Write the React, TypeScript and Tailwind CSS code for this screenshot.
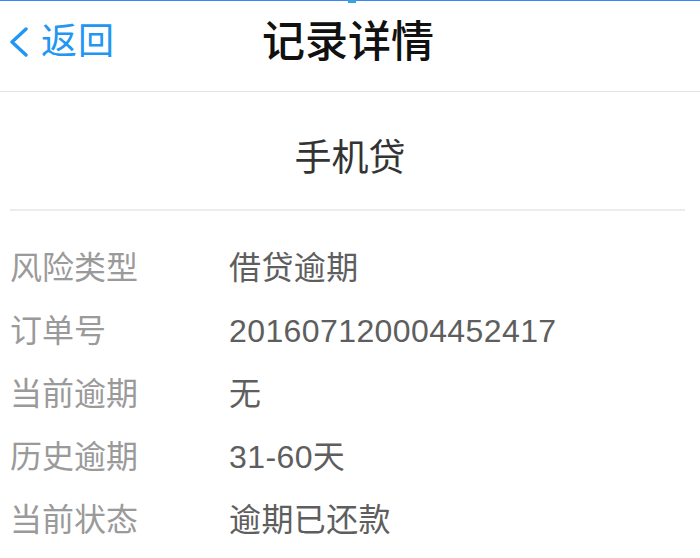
import React from "react";

const font = { fontFamily: '"Liberation Sans", "Noto Sans CJK SC", sans-serif' };

const rows: [string, string][] = [
  ["风险类型", "借贷逾期"],
  ["订单号", "201607120004452417"],
  ["当前逾期", "无"],
  ["历史逾期", "31-60天"],
  ["当前状态", "逾期已还款"],
];

export default function App() {
  return (
    <div className="w-[700px] h-[558px] bg-white overflow-hidden flex flex-col" style={font}>
      <div className="relative h-[1px] bg-[#3a86f5] shrink-0">
        <div className="absolute left-[348px] top-0 w-[8px] h-[3px] bg-[#3aa3dc]" />
      </div>
      <div className="relative h-[91px] shrink-0 flex items-center border-b border-[#e3e3e3]">
        <div className="flex items-center pl-[8px] text-[#2196f3] mt-[-8px]">
          <svg width="22" height="30" viewBox="0 0 22 30" className="mr-[11px]">
            <path d="M18 2 L4 15 L18 28" fill="none" stroke="#2196f3" strokeWidth="3.4" strokeLinecap="round" strokeLinejoin="round" />
          </svg>
          <span className="text-[36px] leading-none tracking-[1px]">返回</span>
        </div>
        <div className="absolute inset-0 flex items-center justify-center mt-[-8px] pr-[4px]">
          <span className="text-[43px] leading-none font-medium text-[#111]">记录详情</span>
        </div>
      </div>
      <div className="h-[117px] shrink-0 flex items-center justify-center pt-[16px]">
        <span className="text-[37px] leading-none text-[#333]">手机贷</span>
      </div>
      <div className="mx-[10px] mr-[15px] h-[2px] bg-[#ececec] shrink-0" />
      <div className="flex flex-col pt-[25px] pl-[10px]">
        {rows.map(([k, v]) => (
          <div key={k} className="h-[63px] flex items-center">
            <span className="w-[219px] text-[32px] leading-none text-[#9a9a9a]">{k}</span>
            <span className="text-[32px] leading-none text-[#5e5e5e] tracking-[0.4px]">{v}</span>
          </div>
        ))}
      </div>
    </div>
  );
}
